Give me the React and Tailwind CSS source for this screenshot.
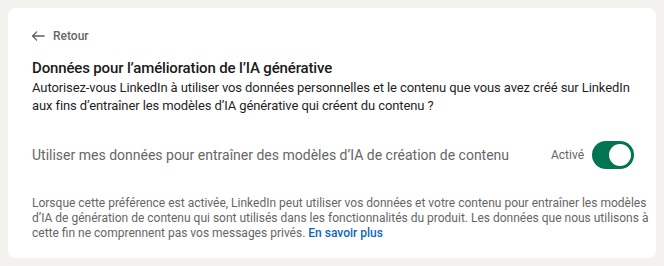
import React from "react";

export default function App() {
  return (
    <div
      className="w-[664px] h-[266px] bg-[#f4f2ee] p-2"
      style={{ fontFamily: 'Roboto, "Noto Sans", sans-serif' }}
    >
      <div className="w-[648px] h-[250px] bg-white rounded-lg px-6 pt-4">
        <div className="flex items-center h-6 gap-[8px] text-[#666666]">
          <svg width="14" height="14" viewBox="0 0 16 16" fill="none" className="ml-[-1px]">
            <path d="M15 8H1.8M6.5 3.3L1.8 8l4.7 4.7" stroke="#5e5e5e" strokeWidth="1.5" strokeLinecap="round" strokeLinejoin="round" />
          </svg>
          <span className="text-[12px] font-medium">Retour</span>
        </div>
        <h1 className="mt-[9px] text-[15px] leading-[22px] font-medium text-[#1a1a1a] tracking-[-0.15px]">
          Données pour l’amélioration de l’IA générative
        </h1>
        <p className="text-[13px] leading-[18px] text-[#1f1f1f] whitespace-nowrap tracking-[-0.1px]">
          Autorisez-vous LinkedIn à utiliser vos données personnelles et le contenu que vous avez créé sur LinkedIn
          <br />
          aux fins d’entraîner les modèles d’IA générative qui créent du contenu ?
        </p>
        <div className="mt-[26px] h-7 flex items-center justify-between">
          <span className="text-[14px] text-[#666666] whitespace-nowrap">
            Utiliser mes données pour entraîner des modèles d’IA de création de contenu
          </span>
          <div className="flex items-center gap-[8px] mr-[-2px]">
            <span className="text-[12px] text-[#666666]">Activé</span>
            <div className="w-[42px] h-[28px] rounded-full bg-[#01754f] flex items-center justify-end pr-[3px]">
              <div className="w-[22px] h-[22px] rounded-full bg-white" />
            </div>
          </div>
        </div>
        <p className="mt-[27px] text-[12px] leading-[15px] text-[#666666] whitespace-nowrap">
          Lorsque cette préférence est activée, LinkedIn peut utiliser vos données et votre contenu pour entraîner les modèles
          <br />
          d’IA de génération de contenu qui sont utilisés dans les fonctionnalités du produit. Les données que nous utilisons à
          <br />
          cette fin ne comprennent pas vos messages privés.{" "}
          <a className="text-[#0a66c2] font-medium" href="#">En savoir plus</a>
        </p>
      </div>
    </div>
  );
}
